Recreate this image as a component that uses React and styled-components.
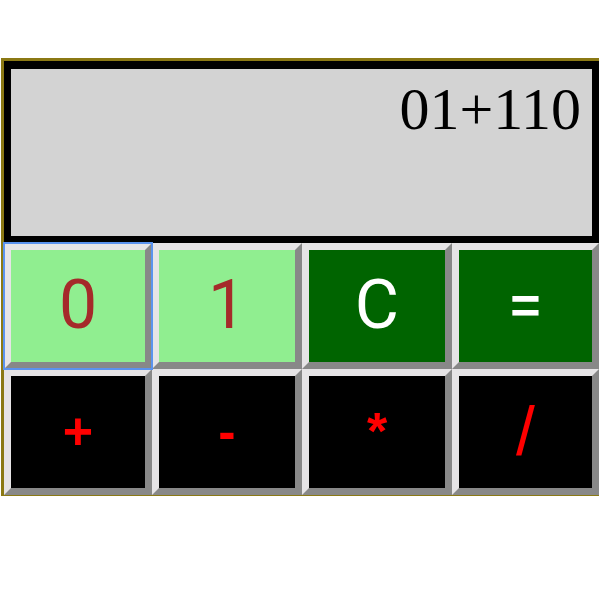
import React, { useState } from "react";
import styled, { createGlobalStyle } from "styled-components";

const GlobalStyle = createGlobalStyle`
  body {
    margin: 0;
    background: #ffffff;
  }
`;

const Calculator = styled.main`
  box-sizing: border-box;
  margin: 58px 1px 0;
  border: solid #8b7914;
  border-width: 3px 0 1px 3px;
`;

const Display = styled.output`
  display: block;
  box-sizing: border-box;
  min-height: 182px;
  padding: 4px 11px;
  border: solid #000000;
  border-width: 8px 7px 7px;
  background: #d3d3d3;
  color: #000000;
  font-family: "Liberation Serif", serif;
  font-size: 60px;
  line-height: 72px;
  text-align: right;
`;

const Keypad = styled.div`
  display: grid;
  grid-template-columns: 148fr 150fr 150fr 147fr;
`;

const variants = {
  digit: { background: "#90ee90", color: "#a52a2a" },
  command: { background: "#006400", color: "#ffffff" },
  operator: { background: "#000000", color: "#ff0000" },
};

const faces = {
  character: { family: "Roboto, sans-serif", size: 68, weight: 400 },
  symbol: { family: '"Liberation Sans", sans-serif', size: 52, weight: 700 },
  slash: { family: '"Liberation Sans", sans-serif', size: 68, weight: 400 },
};

const Key = styled.button`
  height: 126px;
  padding: 0 0 2px;
  border: 7px solid;
  border-color: #e6e4e6 #888888 #888888 #e6e4e6;
  background: ${({ $variant }) => variants[$variant].background};
  color: ${({ $variant }) => variants[$variant].color};
  font-family: ${({ $face }) => faces[$face].family};
  font-size: ${({ $face }) => faces[$face].size}px;
  font-weight: ${({ $face }) => faces[$face].weight};
  line-height: 72px;
  text-align: center;
  outline: none;

  &:focus {
    outline: 2px solid #5b93ee;
    outline-offset: -1px;
    z-index: 1;
  }
`;

const keys = [
  { label: "0", variant: "digit", face: "character" },
  { label: "1", variant: "digit", face: "character" },
  { label: "C", variant: "command", face: "character" },
  { label: "=", variant: "command", face: "symbol" },
  { label: "+", variant: "operator", face: "symbol" },
  { label: "-", variant: "operator", face: "symbol" },
  { label: "*", variant: "operator", face: "symbol" },
  { label: "/", variant: "operator", face: "slash" },
];

export default function App() {
  const [expression, setExpression] = useState("01+110");

  const press = (label) => {
    if (label === "C") setExpression("");
    else if (label !== "=") setExpression(expression + label);
  };

  return (
    <>
      <GlobalStyle />
      <Calculator>
        <Display>{expression}</Display>
        <Keypad>
          {keys.map(({ label, variant, face }, index) => (
            <Key
              key={label}
              type="button"
              $variant={variant}
              $face={face}
              autoFocus={index === 0}
              onClick={() => press(label)}
            >
              {label}
            </Key>
          ))}
        </Keypad>
      </Calculator>
    </>
  );
}
